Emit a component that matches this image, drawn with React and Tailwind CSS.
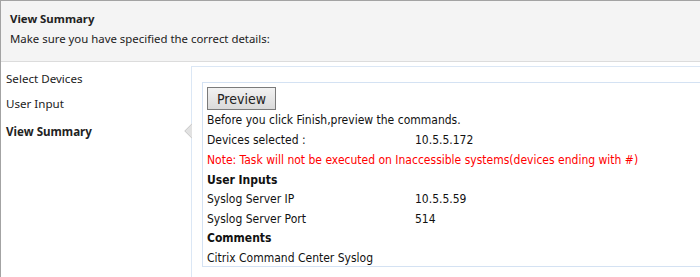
export default function App() {
  const ui = { fontFamily: '"Noto Sans", "Open Sans", sans-serif' };
  const body = { fontFamily: '"DejaVu Sans Condensed", "DejaVu Sans", sans-serif' };

  return (
    <div className="relative h-[277px] w-[700px] overflow-hidden border-l border-t border-[#a3a3a3] bg-white">
      <div className="h-[61px] border-b border-[#dcdcdc] bg-[#f4f4f4] pl-[9px] pt-[8px] text-[11.4px] text-[#222]" style={ui}>
        <div className="h-[20px] font-bold leading-[20px]">View Summary</div>
        <div className="h-[20px] leading-[20px]">Make sure you have specified the correct details:</div>
      </div>

      <div className="flex">
        <div className="w-[190px] shrink-0 pl-[5px] pt-[7px] text-[11.6px] text-[#222]" style={ui}>
          <div className="h-[25px] leading-[20px]">Select Devices</div>
          <div className="h-[28px] leading-[20px]">User Input</div>
          <div className="font-bold leading-[20px]">View Summary</div>
        </div>

        <div className="relative mt-[4px] h-[220px] flex-1 border-l border-t border-[#dbe7f5] pl-[10px] pt-[15px]">
          <svg className="absolute left-[-9px] top-[56px]" width="9" height="16" viewBox="0 0 9 16">
            <path d="M9 0 L1 8 L9 16 Z" fill="#e2e2e2" />
            <path d="M9 1 L2 8 L9 15" fill="none" stroke="#cfcfcf" strokeWidth="1" />
          </svg>
          <div className="h-[185px] border-y border-l border-[#d4e2f3] pl-[4px] pt-[4px] text-[12px] text-[#111]" style={body}>
            <button
              className="h-[23px] w-[69px] border border-[#7a7a7a] bg-gradient-to-b from-[#f2f2f2] to-[#dadada] text-[14px] leading-[20px] text-[#222]"
              style={body}
            >
              Preview
            </button>
            <div className="mt-[0px] h-[20px] leading-[20px]">Before you click Finish,preview the commands.</div>
            <div className="flex h-[20px] leading-[20px]">
              <span className="w-[208px]">Devices selected :</span>
              <span>10.5.5.172</span>
            </div>
            <div className="h-[20px] leading-[20px] text-[#ff0000]">
              Note: Task will not be executed on Inaccessible systems(devices ending with #)
            </div>
            <div className="h-[20px] font-bold leading-[20px]">User Inputs</div>
            <div className="flex h-[19px] leading-[19px]">
              <span className="w-[208px]">Syslog Server IP</span>
              <span>10.5.5.59</span>
            </div>
            <div className="flex h-[20px] leading-[20px]">
              <span className="w-[208px]">Syslog Server Port</span>
              <span>514</span>
            </div>
            <div className="h-[19px] font-bold leading-[19px]">Comments</div>
            <div className="h-[20px] leading-[20px]">Citrix Command Center Syslog</div>
          </div>
        </div>
      </div>
    </div>
  );
}
